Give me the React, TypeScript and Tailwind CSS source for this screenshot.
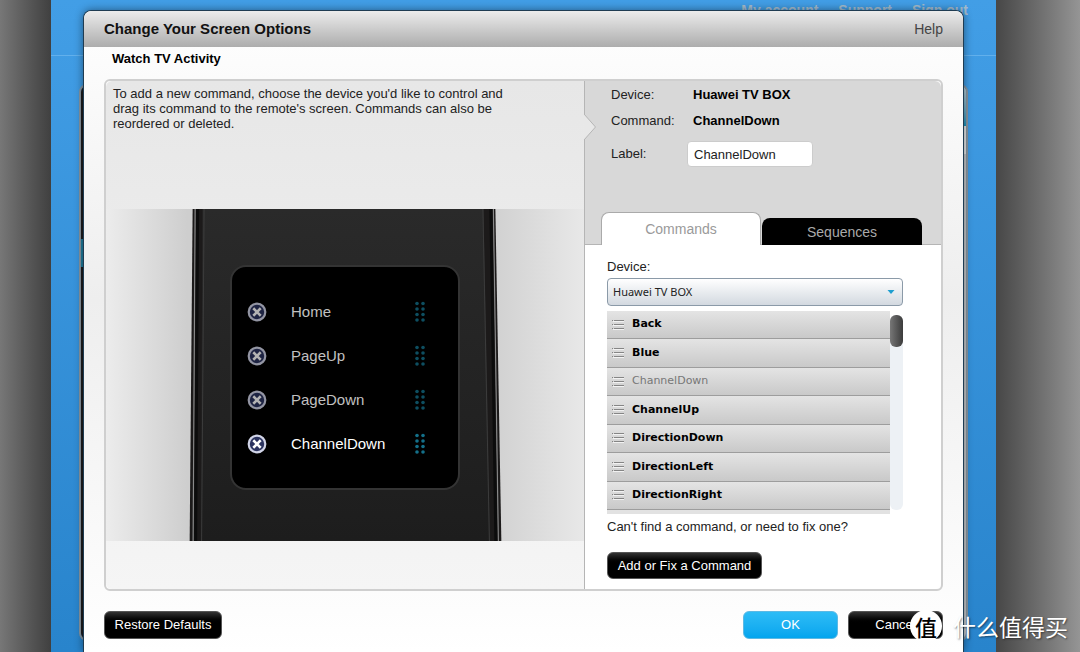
import React, { useState } from 'react';

const comandosPantalla = ['Home', 'PageUp', 'PageDown', 'ChannelDown'];

const comandosDisponibles = [
    'Back', 'Blue', 'ChannelDown', 'ChannelUp', 'DirectionDown', 'DirectionLeft', 'DirectionRight',
];

const DeleteIcon: React.FC = () => (
    <svg className="w-5 h-5" viewBox="0 0 20 20" fill="none">
        <circle cx="10" cy="10" r="8.3" fill="#2c3460" stroke="#d2d5e8" strokeWidth="2.2" />
        <path d="M7.200 7.200l5.600 5.600M12.800 7.200l-5.600 5.600" stroke="#fff" strokeWidth="2.600" strokeLinecap="square" />
    </svg>
);

const DragDots: React.FC = () => (
    <svg className="w-3 h-[22px]" viewBox="0 0 12 22" fill="#14708a">
        {[3, 9].map((x) =>
            [2.5, 8, 13.5, 19].map((y) => <circle key={`${x}-${y}`} cx={x} cy={y} r="1.8" />)
        )}
    </svg>
);

const HandleIcon: React.FC = () => (
    <svg className="w-3 h-3" viewBox="0 0 12 12" fill="none">
        <path d="M0 1.5h1M2 1.5h10M0 5.5h1M2 5.5h10M0 9.5h1M2 9.5h10" stroke="#858585" />
        <path d="M1 2.5h11M1 6.5h11M1 10.5h11" stroke="#f2f2f2" />
    </svg>
);

const RemoteBody: React.FC = () => (
    <svg className="absolute inset-0 w-full h-full" viewBox="0 0 480 332" preserveAspectRatio="none">
        <defs>
            <linearGradient id="wall" x1="0" x2="1" y1="0" y2="0">
                <stop offset="0" stopColor="#ececec" />
                <stop offset="0.17" stopColor="#cecece" />
                <stop offset="0.82" stopColor="#d2d2d2" />
                <stop offset="1" stopColor="#e8e8e8" />
            </linearGradient>
            <linearGradient id="body" x1="0" x2="0" y1="0" y2="1">
                <stop offset="0" stopColor="#2a2a2a" />
                <stop offset="1" stopColor="#1d1d1d" />
            </linearGradient>
        </defs>
        <rect width="480" height="332" fill="url(#wall)" />
        <path d="M87 0H391L397 332H84Z" fill="#1c1a1a" />
        <path d="M97 0H379L386 332H95Z" fill="url(#body)" />
        <path d="M89.500 0L87.500 332M389 0L394 332" stroke="#8a8a8a" strokeWidth="1.200" />
        <path d="M92 0L90 332M386.500 0L391.500 332" stroke="#0c0c0c" strokeWidth="3" />
        <path d="M98.500 0L96 332M378.500 0L385 332" stroke="#3c3c3c" />
    </svg>
);

const RemoteScreen: React.FC = () => (
    <div className="relative h-[332px] pt-14">
        <RemoteBody />
        <ul className="relative mx-auto w-[230px] h-[225px] rounded-2xl border-2 border-[#343434] bg-black pt-[23px] pl-[15px] pr-8">
            {comandosPantalla.map((nombre) => (
                <li key={nombre} className={`flex items-center h-11 text-[15px] ${nombre === 'ChannelDown' ? 'text-white' : 'text-[#c0c0c0]'}`}>
                    <button aria-label={`Delete ${nombre}`} className={nombre === 'ChannelDown' ? '' : 'opacity-70'}>
                        <DeleteIcon />
                    </button>
                    <span className="ml-6 flex-1">{nombre}</span>
                    <span className={nombre === 'ChannelDown' ? '' : 'opacity-70'}><DragDots /></span>
                </li>
            ))}
        </ul>
    </div>
);

const Background: React.FC = () => (
    <div className="absolute inset-0 flex overflow-hidden" aria-hidden="true">
        <div className="w-[51px] bg-linear-to-r from-[#777] to-[#404040]" />
        <div className="flex-1 bg-linear-to-b from-[#429ee6] to-[#2884cc]">
            <div className="flex justify-end gap-5 h-14 border-b border-[#62b0ec] pr-7 pt-0.5 text-sm leading-4 font-bold text-[#a5bdce]">
                <span>My account</span>
                <span>Support</span>
                <span>Sign out</span>
            </div>
            <div className="mt-7 mx-7 flex h-[557px] rounded-lg border-2 border-[#8795a0] overflow-hidden">
                <div className="w-1/2 bg-[#1c1c1e] pt-[153px]">
                    <div className="h-7 bg-[#207ea0]" />
                </div>
                <div className="w-1/2 bg-[#c4c8cc]">
                    <div className="h-10 bg-linear-to-b from-[#b8ced8] to-[#1296c0]" />
                    <div className="h-7 bg-[#e4e8ea]" />
                </div>
            </div>
        </div>
        <div className="w-[84px] bg-linear-to-r from-[#474747] to-[#959595]" />
    </div>
);

const Watermark: React.FC = () => (
    <div className="absolute right-3 bottom-2 flex items-center gap-[11px] font-['Noto_Sans_CJK_SC',sans-serif] pointer-events-none">
        <span className="flex items-center justify-center w-8 h-8 rounded-full bg-white text-black text-[22px] leading-8 font-medium">值</span>
        <span className="text-[23px] leading-9 text-white [text-shadow:1px_1px_2px_rgba(0,0,0,0.5)]">什么值得买</span>
    </div>
);

const darkButton = 'rounded-md border border-[#555] bg-linear-to-b from-[#333] via-black via-45% to-black text-white text-[13px]';

const App: React.FC = () => {
    const [etiqueta, setEtiqueta] = useState('ChannelDown');

    return (
        <div className="relative flex flex-col min-h-screen overflow-hidden pt-2.5 pl-[83px] pr-[116px] font-['Liberation_Sans',Arial,sans-serif] text-[13px] text-[#222]">
            <Background />

            <main role="dialog" aria-labelledby="titulo" className="relative flex-1 rounded-t-lg border border-b-0 border-[#1f3c52] bg-linear-to-b from-white via-[#eee] via-45% to-white shadow-[0_0_8px_rgba(0,0,0,0.45)]">
                <header className="flex items-center justify-between h-9 rounded-t-lg bg-linear-to-b from-[#ececec] to-[#adadad] px-5">
                    <h1 id="titulo" className="text-[15px] font-bold text-[#111]">Change Your Screen Options</h1>
                    <a href="#help" className="text-sm text-[#444]">Help</a>
                </header>
                <h2 className="px-7 pt-1 h-8 text-[13px] leading-4 font-bold text-black">Watch TV Activity</h2>

                <div className="mx-5 flex rounded-md border-2 border-[#cfcfcf]">
                    <section className="flex-1 rounded-l-md bg-linear-to-b from-[#e7e7e7] to-[#f5f5f5]">
                        <p className="h-32 pl-[7px] pr-16 pt-[5px] text-[13px] leading-[15px]">
                            To add a new command, choose the device you'd like to control and drag its command to the remote's screen. Commands can also be reordered or deleted.
                        </p>
                        <RemoteScreen />
                        <div className="h-12" />
                    </section>

                    <section className="relative w-[357px] border-l border-[#b5b5b5] rounded-r-md bg-white">
                        <svg className="absolute -left-px top-8 w-3 h-7" viewBox="0 0 12 28">
                            <path d="M0 1L11.500 14L0 27" fill="#e8e8e8" stroke="#b5b5b5" />
                        </svg>
                        <div className="flex flex-col h-[164px] rounded-tr-md border-b border-[#b5b5b5] bg-[#d8d8d8] pl-4">
                            <dl className="grid grid-cols-[82px_1fr] pl-2.5 pt-px leading-[26px]">
                                <dt>Device:</dt>
                                <dd className="font-bold text-black">Huawei TV BOX</dd>
                                <dt>Command:</dt>
                                <dd className="font-bold text-black">ChannelDown</dd>
                            </dl>
                            <div className="flex items-center pl-2.5 pt-[7px]">
                                <label htmlFor="etiqueta" className="w-[76px]">Label:</label>
                                <input
                                    id="etiqueta"
                                    value={etiqueta}
                                    onChange={(e) => setEtiqueta(e.target.value)}
                                    className="w-[126px] h-[26px] rounded-sm border border-[#ccc] bg-white px-1.5 text-[13px]"
                                />
                            </div>
                            <div role="tablist" className="mt-auto -mb-px flex items-end gap-px">
                                <button role="tab" aria-selected="true" className="w-40 h-[33px] rounded-t-lg border border-b-0 border-[#aaa] bg-white text-sm text-[#9a9a9a]">Commands</button>
                                <button role="tab" aria-selected="false" className="w-40 h-[27px] rounded-t-lg bg-black text-sm text-[#aaa]">Sequences</button>
                            </div>
                        </div>

                        <div className="pl-[22px] pr-[38px] pt-3.5">
                            <label htmlFor="dispositivo" className="block h-[19px] leading-4">Device:</label>
                            <div className="relative">
                                <select id="dispositivo" className="w-full h-7 appearance-none rounded border border-[#8b9aa8] bg-linear-to-b from-white to-[#d3d9e0] px-[5px] font-['Noto_Sans',sans-serif] text-[11px] text-[#222]">
                                    <option>Huawei TV BOX</option>
                                </select>
                                <svg className="absolute right-2 top-3 w-2 h-1 pointer-events-none" viewBox="0 0 8 4"><path d="M0.500 0h7L4 4z" fill="#1e9fd0" /></svg>
                            </div>

                            <div className="mt-[5px] flex">
                                <ul className="flex flex-col flex-1 h-[203px] font-['DejaVu_Sans',sans-serif] text-[11px]">
                                    {comandosDisponibles.map((nombre) => (
                                        <li key={nombre} className={`flex items-center gap-2 flex-1 border-b border-[#9d9d9d] bg-linear-to-b from-[#e4e4e4] to-[#c9c9c9] pl-[5px] ${nombre === 'ChannelDown' ? 'text-[#777]' : 'font-bold text-black'}`}>
                                            <HandleIcon />
                                            <span>{nombre}</span>
                                        </li>
                                    ))}
                                    <li className="h-1 bg-[#e2e2e2]" />
                                </ul>
                                <div className="mt-1 mb-1 w-[13px] rounded-md bg-[#edf1f5]">
                                    <div className="h-8 rounded-md bg-linear-to-r from-[#777] to-[#3c3c3c]" />
                                </div>
                            </div>

                            <p className="mt-[3px] leading-5">Can't find a command, or need to fix one?</p>
                            <button className={`mt-[15px] w-[155px] h-[27px] ${darkButton}`}>Add or Fix a Command</button>
                        </div>
                    </section>
                </div>

                <footer className="mx-5 mt-5 flex gap-2.5">
                    <button className={`w-[118px] h-7 ${darkButton}`}>Restore Defaults</button>
                    <button className="ml-auto w-[95px] h-7 rounded-md border border-[#5cb9e4] bg-linear-to-b from-[#2cbcf6] to-[#02a5ee] text-[13px] text-white">OK</button>
                    <button className={`w-[95px] h-7 ${darkButton}`}>Cancel</button>
                </footer>
            </main>

            <Watermark />
        </div>
    );
};

export default App;
